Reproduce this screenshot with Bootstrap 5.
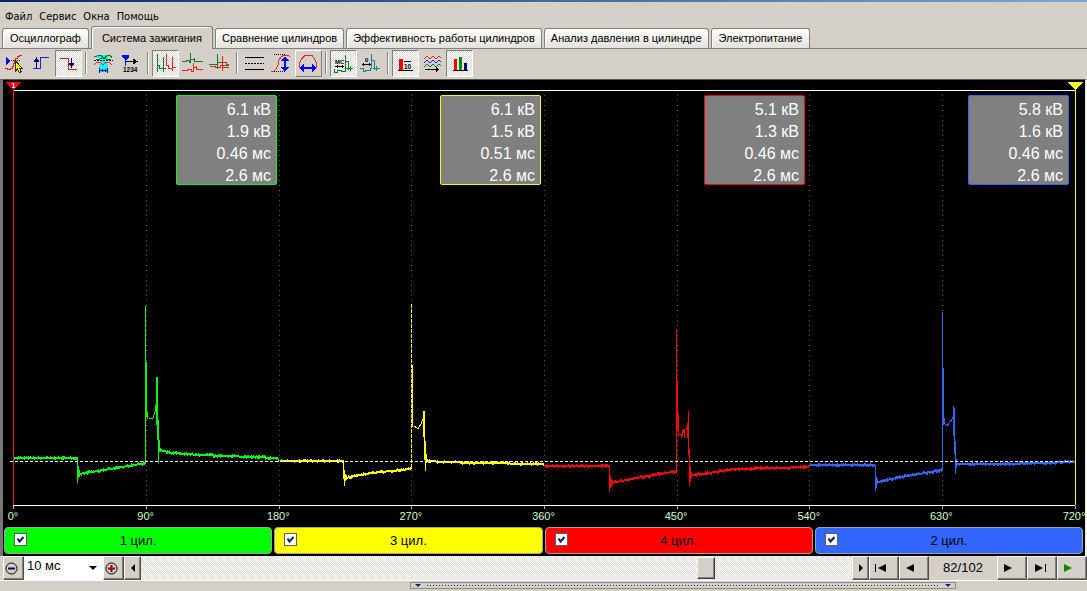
<!DOCTYPE html>
<html lang="ru">
<head>
<meta charset="utf-8">
<meta name="viewport" content="width=device-width, initial-scale=1">
<title>Система зажигания</title>
<link href="https://cdn.jsdelivr.net/npm/bootstrap@5.3.0/dist/css/bootstrap.min.css" rel="stylesheet">
<style>
:root{--face:#d4d0c8;--shade:#808080}
body{background:var(--face);color:#000;font:11px/14px "Liberation Sans",Arial,sans-serif;overflow:hidden}
button,input,select{font-family:inherit}
.title-strip{height:2px;background:linear-gradient(90deg,#0a246a,#7fa5d8)}
.menu-bar{height:25px;padding:8px 5px 0;gap:7px;font-family:"DejaVu Sans Condensed","DejaVu Sans",sans-serif}
.menu-bar a{color:#000;text-decoration:none}
.tab-strip{height:22px;border-bottom:1px solid var(--shade);padding-left:2px;gap:2px;flex-wrap:nowrap}
.tab-strip .nav-link{height:20px;padding:0 6px;margin:0;color:#000;font-size:11px;line-height:19px;white-space:nowrap;border:1px solid var(--shade);border-bottom:0;border-radius:3px 3px 0 0;background:linear-gradient(#fff,#e4e1dc);box-shadow:inset 1px 1px 0 #fff}
.tab-strip .nav-link:first-child,.tab-strip .nav-link:last-child{padding:0 7px}
.tab-strip .nav-link.active{height:23px;margin-bottom:-1px;padding:0 10px;background:var(--face);color:#000;border-color:var(--shade)}
.tool-bar{height:30px;padding:1px 0 0 1px}
.tool{width:27px;height:27px;padding:0;border:1px solid transparent;background:none;border-radius:0}
.tool svg{display:block;margin:-1px;width:27px;height:27px;fill:none;shape-rendering:crispEdges}
.tool.raised{border-color:#fff var(--shade) var(--shade) #fff}
.tool.pressed{border-color:var(--shade) #fff #fff var(--shade)}
.pressed,.scroll-track{background:repeating-conic-gradient(#fff 0 25%,#dcd8d2 0 50%) 0 0/2px 2px}
.divider{width:2px;height:22px;margin:2px 3px;border-left:1px solid var(--shade);border-right:1px solid #fff}
.scope{min-height:0;background:#000;border-left:3px solid #777;border-right:2px solid #f4f2ee;border-top:1px solid #555}
.plot{min-height:0}
.plot>svg{display:block;width:100%;height:100%}
.plot path{vector-effect:non-scaling-stroke}
.readouts{position:absolute;left:10px;right:16px;top:15px;display:grid;grid-template-columns:repeat(4,1fr)}
.readout{justify-self:end;width:101px;height:90px;padding:3px 5px 0;background:#808080;border:1px solid var(--ch);border-radius:2px;font-size:16px;line-height:22px;text-align:right}
.readout span{display:block;color:#fff}
.axis-labels{height:16px;padding:0 9px 0 10px;color:#cfffcf;line-height:13px}
.axis-labels span{width:0;display:flex;justify-content:center}
.axis-labels span:last-child{margin-right:2px}
.channels{display:grid;grid-template-columns:repeat(4,1fr);gap:2px;padding:1px 2px 2px 1px}
.channel{height:27px;border:1px solid #a0a0a0;border-radius:4px;font-size:13px;position:relative;background:var(--ch)}
.channel .form-check-input{position:absolute;left:9px;top:5px;width:13px;height:13px;margin:0;border:1px solid #606060;border-radius:0;background-color:#fff}
.channel .form-check-input:checked[type=checkbox]{background-image:url("data:image/svg+xml,%3Csvg xmlns='http://www.w3.org/2000/svg' viewBox='0 0 11 11'%3E%3Cpath d='M2.5 4.5l2 3L8.500 3' fill='none' stroke='%230a246a' stroke-width='2'/%3E%3C/svg%3E");background-size:11px 11px}
.ch1{--ch:#00ff00}.ch2{--ch:#ffff00}.ch3{--ch:#ff0000}.ch4{--ch:#3366ff}
.transport{height:24px;padding-left:3px}
.key{height:24px;padding:0;border:1px solid;border-color:#fff #505050 #505050 #fff;box-shadow:inset -1px -1px 0 var(--shade);border-radius:0;background:var(--face);display:flex;align-items:center;justify-content:center;flex-shrink:0}
.key svg{display:block}
.key-s{width:17px}.key-m{width:21px}.key-l{width:30px}
.time-base{width:79px;height:24px;padding:0 0 4px 3px;border:0;border-radius:0;background-color:#fff;color:#000;font-size:13px;line-height:18px;background-image:url("data:image/svg+xml,%3Csvg xmlns='http://www.w3.org/2000/svg' viewBox='0 0 8 4'%3E%3Cpath d='M0 0h8L4 4z'/%3E%3C/svg%3E");background-size:8px 4px;background-position:right 6px center}
.scroll-track{appearance:none;-webkit-appearance:none;min-width:0;height:24px;margin:0}
.scroll-track::-webkit-slider-thumb{-webkit-appearance:none;width:18px;height:22px;background:var(--face);border:1px solid;border-color:#fff #404040 #404040 #fff;box-shadow:inset -1px -1px 0 var(--shade)}
.frame-count{width:68px;font-size:13px;line-height:24px;text-align:center}
.bottom-edge{height:11px;border-top:1px solid #fff}
.splitter{height:7px;margin:1px 131px 0 410px;padding:0 4px;border:1px solid #8c8c8c;gap:6px}
.splitter i{height:1px;background:repeating-linear-gradient(90deg,#26336a 0 1px,transparent 1px 3px)}
</style>
</head>
<body class="vh-100 d-flex flex-column">
<div class="title-strip flex-shrink-0"></div>
<nav class="menu-bar d-flex flex-shrink-0">
<a href="#">Файл</a><a href="#">Сервис</a><a href="#">Окна</a><a href="#">Помощь</a>
</nav>
<div class="tab-strip nav nav-tabs align-items-end flex-shrink-0" role="tablist">
<button class="nav-link" role="tab">Осциллограф</button>
<button class="nav-link active" role="tab" aria-selected="true">Система зажигания</button>
<button class="nav-link" role="tab">Сравнение цилиндров</button>
<button class="nav-link" role="tab">Эффективность работы цилиндров</button>
<button class="nav-link" role="tab">Анализ давления в цилиндре</button>
<button class="nav-link" role="tab">Электропитание</button>
</div>
<div class="tool-bar d-flex flex-shrink-0" role="toolbar">
<button class="tool" aria-label="Курсор"><svg viewBox="0 0 27 27"><path d="M4 18h2v1h3v-1h2v-2h1v-3h1v-3h1v-2h2V6h2V5h3" stroke="#e02020"/><path d="M5 7v8l5-4z" fill="#00f"/><path d="M10 10.500h10" stroke="#00a" stroke-dasharray="1 1"/><path d="M14.500 11v10l2-2 2 3.500 2-1-2-3h3z" fill="#ff0" stroke="#330"/></svg></button>
<button class="tool" aria-label="По фронту"><svg viewBox="0 0 27 27"><path d="M5 18.500h7.500v-11H21" stroke="#22c"/><path d="M8.500 18V9" stroke="#006"/><path d="M8.500 7L5.500 12h6z" fill="#006"/></svg></button>
<button class="tool pressed" aria-label="По спаду"><svg viewBox="0 0 27 27"><path d="M5 8.500h8.500v11H22" stroke="#c22"/><path d="M16.500 8v7" stroke="#006"/><path d="M13.500 13h6l-3 5z" fill="#006"/></svg></button>
<span class="divider"></span>
<button class="tool" aria-label="Синхронизация"><svg viewBox="0 0 27 27"><path d="M6 5h13l-1 4-3 3 3 3v7H9v-7l3-3-4-3z" fill="#0ff"/><path d="M4 6.500h2l2-1h3l2 2h2l2-2h3l2 2M6 9.500h3l2-1h4l2 1h4" stroke="#187830"/><path d="M4 10.500h19" stroke="#000" stroke-dasharray="2 1"/><path d="M4 14.500l3-2h3l3 2 3-2h3l3 2" stroke="#d22"/><path d="M9 20.500h9M9.500 17.500v5M17.500 17.500v5M12.500 19v3M15.500 19v3" stroke="#00c"/></svg></button>
<button class="tool" aria-label="Порядок цилиндров"><svg viewBox="0 0 27 27"><path d="M5 5h7v2l-3 3H8L5 7z" fill="#00f"/><path d="M8.500 9v7" stroke="#00f"/><path d="M9 11.500h9" stroke="#000"/><path d="M16 8.500l4.500 3-4.500 3z" fill="#000"/><text x="6" y="22" font-size="6.500" font-weight="700" fill="#000">1234</text></svg></button>
<span class="divider"></span>
<button class="tool pressed" aria-label="Последовательно"><svg viewBox="0 0 27 27"><path d="M5.500 4v18M5.500 15.500h2v3h3.500v-2h.5V7M11.500 17v5M11 18.500h3" stroke="#187830"/><path d="M14.500 4v11h2v3h3.500v-2h.5V7M20.500 16v5M20 17.500h4" stroke="#e22"/></svg></button>
<button class="tool" aria-label="Раздельно"><svg viewBox="0 0 27 27"><path d="M3 11.500h4v-1h3v2h1.500V3M11.500 9.500h4V8v3.500h8" stroke="#187830"/><path d="M3 20.500h5v-1h4v2h2.500V13M14.500 17.500h3V16v3.500h6" stroke="#e22"/></svg></button>
<button class="tool" aria-label="С наложением"><svg viewBox="0 0 27 27"><path d="M3 14.500h8.500V4M11.500 14v5M12 12.500h4.500v3H23" stroke="#187830"/><path d="M4 16.500h5v1h5v-2h2.500V6M16.500 15v6M17 12.500h3.500v2H23M17 17.500h6" stroke="#e22"/></svg></button>
<span class="divider"></span>
<button class="tool" aria-label="Линии"><svg viewBox="0 0 27 27"><path d="M4 7.500h19M4 19.500h19" stroke="#000"/><path d="M4 13.500h19" stroke="#000" stroke-dasharray="2 1"/></svg></button>
<button class="tool" aria-label="По вертикали"><svg viewBox="0 0 27 27"><path d="M6 4.500h12M4 21.500h14" stroke="#000" stroke-dasharray="1 1"/><path d="M3 21h3l2-2 2-4 1-5 2-3 3-2h4l2 2" stroke="#e22"/><path d="M17 8v11" stroke="#00f" stroke-width="2"/><path d="M17 6l-4 5h8zM17 22l-4-5h8z" fill="#00f"/></svg></button>
<button class="tool raised" aria-label="По горизонтали"><svg viewBox="0 0 27 27"><path d="M4.500 18v-5l2-4 3-3 3-1h2l3 1 2 3 2 4v5" stroke="#e22"/><path d="M7 18h12" stroke="#00f" stroke-width="2"/><path d="M4 18l5-4v8zM22 18l-5-4v8z" fill="#00f"/></svg></button>
<span class="divider"></span>
<button class="tool pressed" aria-label="Длительность"><svg viewBox="0 0 27 27"><text x="5" y="14" font-size="6" font-weight="700" fill="#000">МС</text><path d="M5 16.500h9M7.500 15v3M12.500 15v3" stroke="#000"/><path d="M4.500 19v3H7v-1.500h4v1h4.500V5M15.500 11.500h3v8M16 18.500h7M20.500 16v5" stroke="#187830"/></svg></button>
<button class="tool" aria-label="Смещение"><svg viewBox="0 0 27 27"><text x="8" y="12" font-size="6" font-weight="700" fill="#000">0</text><path d="M5 14.500h9M6.500 13v3M12.500 13v3" stroke="#000"/><path d="M3 18.500h3v3h2v-1h5v-2h1.500V4M14.500 10.500h3v9M16 18.500h7M19.500 16v5" stroke="#178080"/></svg></button>
<span class="divider"></span>
<button class="tool pressed" aria-label="Значения"><svg viewBox="0 0 27 27"><path d="M7 9h4v11H7z" fill="#e00"/><path d="M6 20.500h15M12 11.500h7" stroke="#000"/><text x="12" y="18.500" font-size="6.500" font-weight="700" fill="#000">10</text></svg></button>
<button class="tool" aria-label="Кривые"><svg viewBox="0 0 27 27"><path d="M5 9l3-3 3 3 3-3 3 3 3-3 2 2" stroke="#e22"/><path d="M5 13l3-3 3 3 3-3 3 3 3-3 2 2" stroke="#22e"/><path d="M5 17l3-3 3 3 3-3 3 3 3-3 2 2" stroke="#187830"/><path d="M6 19.500h14M17.500 17v5M18.500 18v3" stroke="#000"/></svg></button>
<button class="tool pressed" aria-label="Гистограмма"><svg viewBox="0 0 27 27"><path d="M8 9h3v11H8z" fill="#e00"/><path d="M13 7h3v13h-3z" fill="#080"/><path d="M18 13h3v7h-3z" fill="#008"/><path d="M7 20.500h15" stroke="#000"/></svg></button>
</div>
<main class="scope flex-grow-1 d-flex flex-column">
<div class="plot flex-grow-1 position-relative">
<svg viewBox="3 80 1082 430" preserveAspectRatio="none" fill="none" shape-rendering="crispEdges">
<path d="M146.500 95V505M279.500 95V505M411.500 95V505M544.500 95V505M677.500 95V505M809.500 95V505M942.500 95V505" stroke="#5c5c5c" stroke-dasharray="1 4"/>
<path d="M13 90.500H1075M13 505.500H1075" stroke="#fff"/>
<path d="M13.500 506v3M146.500 506v3M279.500 506v3M411.500 506v3M544.500 506v3M677.500 506v3M809.500 506v3M942.500 506v3M1075.500 506v3" stroke="#aaa"/>
<g id="traces"></g>
<path d="M10 461.500H1075" stroke="#fff" stroke-dasharray="3 2"/>
<path d="M13.500 90V505" stroke="#e82020"/><path d="M1075.500 90V505" stroke="#ffff40"/>
<path d="M6 82H21L13.500 90z" fill="#f00"/><path d="M1068 82H1083L1075.500 90z" fill="#ff0"/>
<text x="11.500" y="88" font-size="7" font-weight="700" fill="#fff">1</text>
<text x="1073.500" y="88" font-size="7" fill="#fffbb0">2</text>
</svg>
<div class="readouts">
<div class="readout ch1"><span>6.1 кВ</span><span>1.9 кВ</span><span>0.46 мс</span><span>2.6 мс</span></div>
<div class="readout ch2"><span>6.1 кВ</span><span>1.5 кВ</span><span>0.51 мс</span><span>2.6 мс</span></div>
<div class="readout ch3"><span>5.1 кВ</span><span>1.3 кВ</span><span>0.46 мс</span><span>2.6 мс</span></div>
<div class="readout ch4"><span>5.8 кВ</span><span>1.6 кВ</span><span>0.46 мс</span><span>2.6 мс</span></div>
</div>
</div>
<div class="axis-labels d-flex justify-content-between flex-shrink-0">
<span>0°</span><span>90°</span><span>180°</span><span>270°</span><span>360°</span><span>450°</span><span>540°</span><span>630°</span><span>720°</span>
</div>
<div class="channels flex-shrink-0">
<div class="channel ch1 d-flex align-items-center justify-content-center"><input class="form-check-input" type="checkbox" id="c1" checked><label for="c1">1 цил.</label></div>
<div class="channel ch2 d-flex align-items-center justify-content-center"><input class="form-check-input" type="checkbox" id="c2" checked><label for="c2">3 цил.</label></div>
<div class="channel ch3 d-flex align-items-center justify-content-center"><input class="form-check-input" type="checkbox" id="c3" checked><label for="c3">4 цил.</label></div>
<div class="channel ch4 d-flex align-items-center justify-content-center"><input class="form-check-input" type="checkbox" id="c4" checked><label for="c4">2 цил.</label></div>
</div>
</main>
<div class="transport d-flex flex-shrink-0">
<button class="key key-m pe-1" aria-label="Уменьшить"><svg width="13" height="13" fill="none"><circle cx="6.500" cy="6.500" r="5.500" stroke="#000"/><path d="M3 6.500h7" stroke="#006" stroke-width="2"/></svg></button>
<select class="time-base form-select" aria-label="Развёртка"><option>10 мс</option></select>
<button class="key key-m pe-1" aria-label="Увеличить"><svg width="13" height="13" fill="none"><circle cx="6.500" cy="6.500" r="5.500" stroke="#000"/><path d="M3 6.500h7M6.500 3v7" stroke="#900" stroke-width="2"/></svg></button>
<button class="key key-s" aria-label="Назад"><svg width="4" height="8"><path d="M4 0v8L0 4z"/></svg></button>
<input class="scroll-track flex-grow-1" type="range" min="1" max="102" value="82" aria-label="Кадр">
<button class="key key-s" aria-label="Вперёд"><svg width="4" height="8"><path d="M0 0v8l4-4z"/></svg></button>
<button class="key key-l pe-2" aria-label="В начало"><svg width="11" height="8"><path d="M0 0h1v8H0zM11 0v8L3 4z"/></svg></button>
<button class="key key-l pe-2" aria-label="Предыдущий"><svg width="8" height="8"><path d="M8 0v8L0 4z"/></svg></button>
<span class="frame-count flex-shrink-0">82/102</span>
<button class="key key-l pe-2" aria-label="Следующий"><svg width="8" height="8"><path d="M0 0v8l8-4z"/></svg></button>
<button class="key key-l pe-1" aria-label="В конец"><svg width="11" height="8"><path d="M0 0v8l8-4zM10 0h1v8h-1z"/></svg></button>
<button class="key key-l pe-2" aria-label="Пуск"><svg width="8" height="8"><path d="M0 0v8l8-4z" fill="#080"/></svg></button>
</div>
<div class="bottom-edge flex-shrink-0">
<div class="splitter d-flex align-items-center"><svg width="6" height="3"><path d="M0 0h6L3 3z" fill="#0a246a"/></svg><i class="flex-grow-1"></i><svg width="6" height="3"><path d="M0 0h6L3 3z" fill="#0a246a"/></svg></div>
</div>
<script src="https://cdn.jsdelivr.net/npm/bootstrap@5.3.0/dist/js/bootstrap.bundle.min.js"></script>
<script>
// Each cylinder: noisy stretches (lists of points), then sharp strokes drawn as lines.
const traces = [
 {c:'#0cf50c', noise:[[[14,458],[77,458]],[[78,474],[110,469],[145,463]],[[160,450],[172,453],[200,455],[278,458]]],
  sharp:'M77.500 457V483M78.500 466V478M79.500 470V477M145.500 464V306M146.500 362V417M147.500 412V419M149 418H153L155 412L157 398M156.500 377V425M157.500 377V440M158.500 420V463M159.500 440V452M278.500 458V462'},
 {c:'#ff0', noise:[[[280,461],[343,461]],[[345,478],[370,473],[411,469]],[[427,461],[445,462],[475,463],[544,464]]],
  sharp:'M343.500 460V479M344.500 470V486M345.500 474V481M346.500 475V480M411.500 469V464M412.500 365V427M414 426L418 429L421 424L424 416M423.500 411V437M424.500 411V460M425.500 441V471M426.500 454V463', dash:'M411.500 304V465'},
 {c:'#f80808', noise:[[[545,466],[609,466]],[[611,483],[635,478],[677,471]],[[692,475],[708,473],[735,469],[809,467]]],
  sharp:'M609.500 465V492M610.500 476V488M611.500 479V487M612.500 480V485M676.500 472V330M677.500 380V431M678.500 414V435M679 434H681V438M682.500 430V436M683.500 429V433M684.500 429V438M686 430L688 424M687.500 423V438M688.500 411V455M689.500 449V486M690.500 466V482M691.500 472V478'},
 {c:'#3366ff', noise:[[[810,465],[875,465]],[[877,482],[900,477],[942,470]],[[957,464],[1000,464],[1075,462]]],
  sharp:'M875.500 465V482M875.500 478V491M876.500 477V488M877.500 479V484M942.500 470V312M943.500 368V425M944.500 418V424M945 424L947 426L950 422L954 416M953.500 406V436M954.500 408V454M955.500 441V474M956.500 459V468'}
];
let seed = 7;
const rand = () => (seed = (seed * 16807) % 2147483647) / 2147483647;
const layer = document.getElementById('traces');
const draw = (d, c, dash) => {
  const p = document.createElementNS('http://www.w3.org/2000/svg', 'path');
  p.setAttribute('d', d); p.setAttribute('stroke', c);
  if (dash) p.setAttribute('stroke-dasharray', dash);
  layer.append(p);
};
for (const t of traces) {
  let d = '';
  for (const seg of t.noise) for (let i = 1; i < seg.length; i++) {
    const [x0, y0] = seg[i-1], [x1, y1] = seg[i];
    for (let x = x0; x < x1; x++) {
      const y = Math.round(y0 + (y1 - y0) * (x - x0) / (x1 - x0));
      d += `M${x + .5} ${y - (rand() > .75 ? 2 : 1)}V${y + (rand() > .75 ? 2 : 1)}`;
    }
  }
  draw(d + t.sharp, t.c);
  if (t.dash) draw(t.dash, t.c, '4 1');
}
</script>
</body>
</html>
